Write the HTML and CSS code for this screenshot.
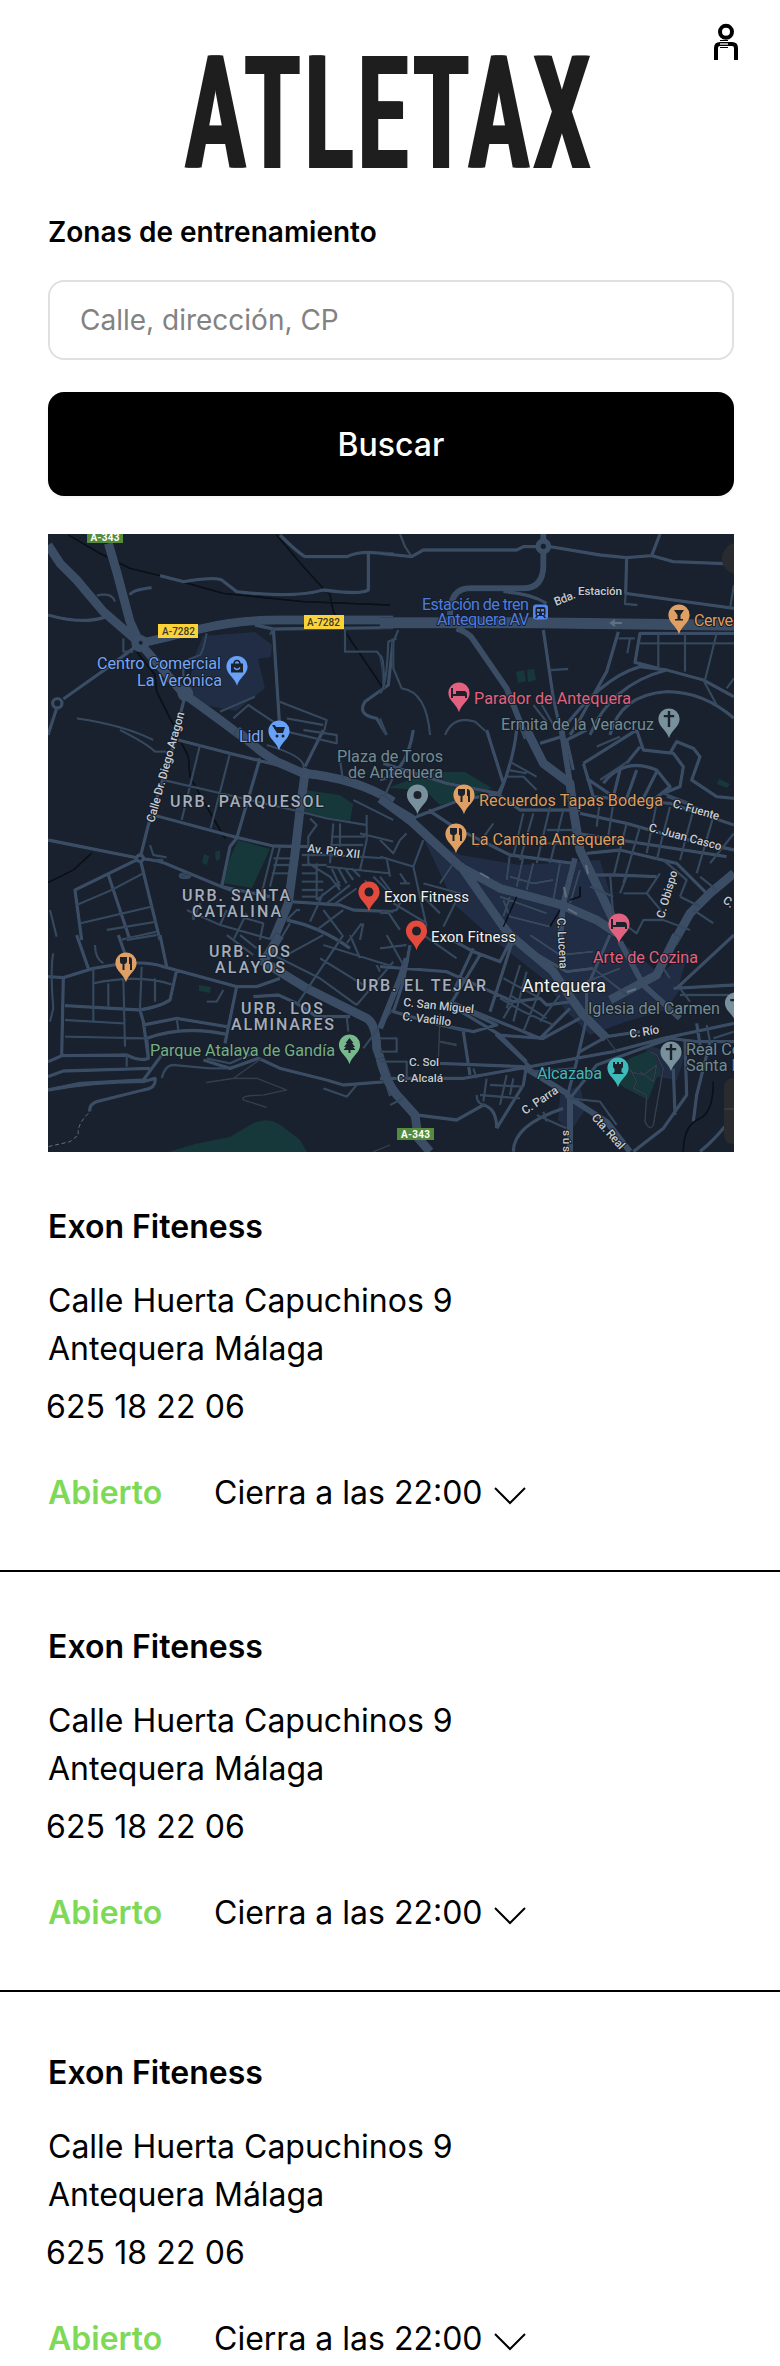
FILE: index.html
```html
<!DOCTYPE html>
<html lang="es">
<head>
<meta charset="utf-8">
<title>Atletax</title>
<link rel="stylesheet" href="styles.css">
</head>
<body>
<header class="header">
  <h1 class="logo"><span class="logo-text">ATLETAX</span></h1>
  <svg class="user" viewBox="714 22 24 40" fill="none" stroke="#000" stroke-width="4"><circle cx="726" cy="31.8" r="6"/><path d="M716 60V48Q716 44 720 44H732Q736 44 736 48V60"/><path d="M720 40.5h8M720 47.5h8" stroke-width="1"/><path d="M720 44h8" stroke="#ddd" stroke-width="1.5"/></svg>
</header>
<main>
  <form class="search">
    <h2 class="search-title">Zonas de entrenamiento</h2>
    <input class="search-input" type="text" placeholder="Calle, dirección, CP">
    <button class="search-button" type="button">Buscar</button>
  </form>
  <svg class="map" viewBox="48 534 686 618">
    <defs>
      <path id="pin" d="M0 19.3C-2 11-10.6 8-10.6 0A10.6 10.6 0 0 1 10.6 0C10.6 8 2 11 0 19.3Z"/>
      <g id="fork"><path d="M-6-6h7v5q-1 2-2.500 2v6h-2v-6q-2.500 0-2.500-2Z"/><path d="M3-6q3 0 3 3v10h-2V1h-1Z"/></g>
      <path id="bed" d="M-8-5h2v6h3v-3h9q2 1 2 3v4h-2V3H-6v2h-2Z"/>
      <path id="cross" d="M-1.200-8h2.400v4h4v2.300h-4V8h-2.400V-1.700h-4V-4h4Z"/>
    </defs>
    <rect class="land" x="48" y="534" width="686" height="618"/>

    <g class="downtown">
      <path d="M203 636L255 632 272 645 271 657 258 659 265 688 236 711 199 704 188 690 195 655Z"/>
      <path d="M422 835L460 855 520 865 600 860 612 900 613 935 680 990 665 1010 625 1022 590 1035 565 1010 545 980 500 945 455 905Z"/>
      <path d="M665 970l24-20-13 45-25 12Z"/><path d="M560 1095l20-10 5 25-15 22-12-12Z"/><path d="M645 1045l40 10-8 25-25-4Z"/>
    </g>
    <g class="park">
      <path d="M230 858L238 840 270 849 252 888 222 883Z"/><path d="M305 790L340 795 353 804 350 822 305 814Z"/>
      <path d="M388 788L430 772 465 772 492 788 475 795 440 805 425 790Z"/>
      <path d="M630 1058L651 1050 660 1070 648 1100 625 1088 612 1078Z"/>
      <path d="M168 1152L195 1144 230 1137 250 1125Q267 1115 282 1126L300 1140 307 1152Z"/>
      <path d="M516 672l8-2 2 11-8 2zM527 670l7-1 2 11-8 2zM204 854l5 2-2 9-5-2zM215 852l5-2v9l-4 2zM199 985l12 2-1 6-11-2zM719 779l11 5-3 4-10-4z"/>
    </g>

    <!-- north-west -->
    <g class="roads" transform="translate(40 525) scale(.33333)">
      <path class="rail" d="M85 30L180 85 270 130 360 152 550 205 790 230 1050 240M710 30L790 125 845 185 870 210 880 260 935 350 1030 490M290 380L345 450 350 500 395 590 420 630"/>
      <path class="xl" d="M24 60L60 115 110 165 190 260 300 355 430 505 540 585 620 645M205 55L230 140 270 290 300 355Q370 340 480 312T720 285H1060" />
      <path class="m" d="M300 355L200 430 70 522M50 550L24 630M720 30Q770 80 795 95H920Q950 82 985 82L1060 87M985 85V195Q960 210 850 195Q760 220 590 200L545 165Q520 155 430 170L360 152M700 310L718 590M645 300L700 312 1060 308M24 270Q130 300 200 275M1060 340L1045 480 975 530Q950 570 1010 580L1040 630M270 210Q275 195 335 188"/>
      <path class="s" d="M225 230Q215 200 170 212M250 340V380H280M500 325Q490 380 480 390L430 410V460M915 310V380H1010Q1030 390 1030 490M110 580Q250 600 340 645M580 580L625 540 700 590 730 630M718 530L860 585 850 630M740 580L850 600M540 560L645 515M700 310L690 330"/>
      <circle class="m" cx="52" cy="535" r="14"/><circle class="hub" cx="436" cy="505" r="24"/><circle class="hub" cx="300" cy="355" r="26"/><circle class="eye" cx="302" cy="353" r="6"/>
      <path class="m" d="M432 525L405 630"/>
    </g>
    <!-- north-east -->
    <g class="roads" transform="translate(380 525) scale(.33333)">
      <path class="xl" d="M0 290H450L1062 298"/>
      <path class="xl" d="M0 290H450L1062 298" transform="translate(0 6)"/>
      <path class="l" d="M490 27V120Q490 190 430 190H270Q210 190 210 270M230 310Q270 325 280 345L380 490 440 640"/>
      <path class="m" d="M0 85L95 95 130 75H410L430 65H510L660 90 740 98 815 92 880 110 1062 117M840 27L815 92M740 98L737 205 1062 250M370 200Q450 205 500 235M490 315L520 520 545 630M715 320L680 440 590 600 570 630M540 625Q660 460 780 425L860 435Q690 480 630 630M860 435L970 465 1062 515M835 430L765 412 780 325H1062M690 630Q720 510 860 500 970 500 1062 580"/>
      <path class="s" d="M60 27L75 65 95 95M737 205L735 237 773 240M55 315L40 350V430L65 490Q140 500 150 630M0 505Q20 490 25 350L50 340M0 390Q15 400 10 490M195 630Q220 570 285 590L330 630M513 435L565 432M835 325V430M915 325V440M1010 325L975 465M780 355H1062M715 340H765M750 340L742 385M970 465L1010 540M1062 460L1040 490M460 540L500 590M480 530L520 600M1062 180L1050 250M0 580L20 630"/>
      <circle class="hub" cx="490" cy="64" r="24"/><circle class="eye" cx="490" cy="64" r="8"/>
    </g>
    <!-- west -->
    <g class="roads" transform="translate(40 730) scale(.33333)">
      <path class="rail" d="M420 30L445 80 450 140 500 230 555 325M155 370L100 420 24 458"/>
      <path class="xl" d="M590 0Q650 60 710 95L790 130Q950 145 1060 215M795 130L780 240 765 370 745 520 700 630"/>
      <path class="m" d="M415 0L325 285 300 385 350 590 360 630M24 330L300 385 105 480 125 630M300 385Q360 390 400 410L545 470 600 490M415 30L570 70 740 112M340 255L590 322 700 348 810 350M205 435L270 630M795 110L850 0M545 470L570 350 590 325M590 325L660 85M750 515L900 525 940 540 1060 545M740 570Q840 590 930 655M545 470L690 500"/>
      <path class="s" d="M370 150L780 245 860 265 980 285M480 45L425 270M570 70L512 295M240 0Q320 40 345 65H380M680 45Q800 80 790 115M720 0L890 40 890 15 790 0M900 90L908 145M1060 140L1035 195M980 255V330L960 420M880 280L870 400M900 280V350M880 320H975M870 345H970M700 350L665 490M720 350L690 470M700 385H750M700 405H750M695 430H745M785 375H870L1040 385 1050 440M785 405H860M785 430H830M785 455H850M785 480H850M785 500H830M830 400V510M805 375V400L870 440 900 480M810 265L830 285 805 320 805 370M860 410L1050 430M875 415L900 470M895 415L920 460M915 415L940 450M935 415L960 440M810 575L850 490M830 510L900 455M860 520L930 465M880 525L950 475M330 345L340 375 380 382M370 390H340M420 435L450 440M110 525L215 480 310 430M120 580L335 530M200 600L350 575M240 630L350 605M460 570V530M440 540L540 585 560 540M580 630L620 550M480 520L460 570M600 560L670 580 660 630M540 585L700 630M740 570L770 540H780M720 630L750 580M850 540L910 620M830 600L910 540M970 580L960 630M965 580L920 640M975 450L1000 490M1000 440L1040 480M940 210L1060 270M960 310L1060 335M30 540L50 620"/>
      <circle class="hub" cx="300" cy="385" r="15"/><circle class="eye" cx="300" cy="385" r="5"/><circle class="hub" cx="794" cy="130" r="17"/><ellipse class="s" cx="435" cy="437" rx="16" ry="7"/>
    </g>
    <!-- east -->
    <g class="roads" transform="translate(380 730) scale(.33333)">
      <path class="xl" d="M0 205L95 275 240 410 360 475 545 525 650 570 710 610M440 0L490 100 570 160 580 240 600 360 700 570M240 405L370 590 410 640M1062 430L990 490 930 550 880 640"/>
      <path class="l" d="M545 0L570 160M585 385L550 520 540 630"/>
      <path class="m" d="M320 0L370 160 355 190 200 160 10 100M410 0Q400 90 360 190L240 210 110 260M110 265L0 200M145 240L220 290 390 375 580 400M350 190L420 240 600 240M600 250L740 280 880 320 1062 360M620 370L720 360 890 400 980 490M590 310L750 335 1040 380M630 435H705L830 440M0 150Q80 130 100 0M610 100L770 0M610 100L640 200 870 220 1062 285M620 145L700 200M670 160Q730 80 830 120L870 170 820 210M700 200L720 120M740 205L770 120M790 205L830 125M740 100L780 50M770 0L790 60 880 70 910 110 900 170 850 190M870 70L890 35 940 55 960 80 935 150 1010 200 1062 205M580 120L560 30 620 0M480 40L545 20"/>
      <path class="s" d="M380 140H430L470 180M385 120L440 130M390 95L470 140M340 280L290 350M430 250L400 380M460 250L420 390M510 230L470 400M550 240L510 400M500 300H590M500 340H590M390 370L380 450M430 380L410 470M540 400L520 510M460 400L440 480M660 210L650 290M700 220L680 350M740 280L700 440M780 290L730 460M830 220L800 370M870 230L830 390M940 240L900 390M1000 260L950 430M1062 310L990 400M630 470L700 500M690 430L700 560M740 440L720 490M600 420L570 520M390 440L460 460 520 450M370 510L390 560 510 590M390 500L370 560M360 500L500 550M730 490H800L850 550M800 490L840 430M850 390L920 450 900 500M900 500L960 530M960 440L1010 480M940 540L1000 580M730 580L770 610 790 570 850 570 930 600M0 380L100 410 140 590M100 410L130 330M0 330L40 370 60 330 80 310M60 460H90M60 430L80 460M130 460L240 490 190 590M180 460L220 400M0 440L60 520 50 540 0 550M130 500L180 550M20 540L60 600M40 520L140 580M850 190L930 220M860 200L970 240M650 50L720 20M660 150L750 90"/>
      <path class="rail" d="M370 590L410 500M510 590L540 540M600 470V500L570 510"/>
    </g>
    <!-- south-west -->
    <g class="roads" transform="translate(40 935) scale(.33333)">
      <path class="xl" d="M720 0L670 80 800 160 980 250Q1010 270 1010 340L1060 480"/>
      <path class="m" d="M24 125L70 128 65 365M70 128L160 100 250 85Q330 80 370 95L590 155 555 325M590 155L650 155 720 130M110 0L145 100M360 0L380 95M235 0L265 85M24 380L65 362 260 360Q300 380 325 370L310 260 300 225 75 212M300 225Q360 215 390 195L410 105M24 425L70 408 330 400M24 465L120 445 310 435 365 360M24 465Q160 440 310 440L345 430Q350 460 310 465L170 500Q145 510 150 530M325 370L320 310Q430 270 560 298M310 270L410 250 560 275M640 185L715 180 770 205 830 245 930 245M490 375L570 400 655 370 720 400 860 435 910 450 1040 440"/>
      <path class="s" d="M160 100V260M205 145V215M250 130L255 335M305 95L300 225M345 130V200M160 145Q300 115 400 150M75 255L250 265M75 305L325 310M260 360V395M410 250L415 285M550 165L530 200H500M40 55Q30 100 40 220L30 260M165 30Q165 70 190 85M260 15L350 0M365 430Q375 390 400 390L510 400 565 400M500 370L570 385 650 350M560 0L640 60M600 0L650 40M700 60L840 130 950 210M740 60L850 0M770 210L850 90 910 0M840 70L970 150M920 245L925 290M850 30L1060 95M930 0L960 70M970 340L1060 220M950 210L1060 80M1010 90L1020 110M850 460L920 485 950 450"/>
      <path class="rail trail" d="M497 443L580 430 665 370M580 430L650 430 740 465 670 480Q600 480 610 495L680 517M1000 650L1050 630"/>
      <path class="path" d="M145 535Q110 570 115 600L90 620 24 635"/>
    </g>
    <!-- south-east -->
    <g class="roads" transform="translate(380 935) scale(.33333)">
      <path class="xl" d="M390 0L520 110 570 185 610 240 680 310M0 370Q20 450 60 490L105 540 115 610 150 650M890 0L830 120 690 195"/>
      <path class="l" d="M720 20L790 150 900 250M0 280L60 130 80 70M430 395L560 475 570 490 570 650M570 490L680 560 750 650"/>
      <path class="m" d="M0 95L200 110 400 200 480 190 500 210 575 200M90 30L70 140 40 230 180 270 280 290 350 270 200 200M190 0L280 50 360 80 400 0M280 40L220 170M330 230L400 10M300 60L210 210 360 300 440 380M370 0L560 110 640 100M690 0L620 160 620 250 590 380 560 490M210 200L480 310 570 220M250 290L270 420M0 430H250L450 395 700 350 850 310 1062 265M180 385L430 395M600 350L680 305 780 290M350 580L430 450 440 390M350 580Q350 520 310 510L230 555 110 540M450 395L350 300 490 310 600 250M400 650Q400 570 550 520M890 160L1062 0M880 160L1062 150M1062 320L950 320 870 310 650 390 570 490M915 320L920 480 850 580 760 650M990 320L950 480 940 560M880 400L885 540M950 265L960 330M1062 540Q1010 610 960 650"/>
      <path class="s" d="M20 0L70 90M0 40L80 30M130 0L230 70M400 200L370 250M440 110L400 260M490 140L430 290M540 180L480 260M390 180L500 250M420 90L380 220M370 130L480 190M360 190L430 230M430 230L520 270M620 140L720 100M640 100L740 180M850 100L870 130M900 160L930 200M320 430L310 500M380 420L360 510M300 480L420 490M330 450L430 455M290 480Q290 510 320 510M450 410L580 400M280 400L290 430M0 310H50V350H0M0 380H80V430M230 330L180 320M400 430L390 480M470 540L560 580M490 530L500 560M570 490L660 500 710 570M900 180L1050 180M980 270L990 320M1000 310L1062 290M30 510L70 490M450 0L540 60 640 50M180 270L260 290"/>
      <path class="trail" d="M180 235L175 380M175 320L225 330M680 310L710 350M750 400L770 440 760 460 800 480 795 560Q810 590 820 570L850 400 830 360 810 350M750 410L790 420 830 390 820 440 780 410"/>
      <path class="rail" d="M1000 440Q1000 530 960 550 910 570 910 650"/>
    </g>
    <g class="arrows"><path d="M611 623h11M615 620l-4 3 4 3M480 873l9 5M586 865l2 9M564 887l2 10M568 909l9 5M627 992l9-3"/></g>

    <!-- map controls cut off by the right edge -->
    <path class="control" d="M734 543a16 16 0 0 0 0 31ZM734 1078q-10 0-10 10v46q0 10 10 10Z"/><path class="control-line" d="M724 1109h10"/>

    <g class="shields">
      <rect class="green" x="87" y="530" width="36" height="13"/><text x="90.500" y="541" textLength="29">A-343</text>
      <rect class="green" x="397" y="1128" width="37" height="12"/><text x="401" y="1138" textLength="29">A-343</text>
      <rect class="yellow" x="158" y="624" width="40" height="14"/><text class="dark" x="162" y="635" textLength="33">A-7282</text>
      <rect class="yellow" x="304" y="615" width="40" height="14"/><text class="dark" x="307" y="626" textLength="33">A-7282</text>
    </g>
    <g class="label">
      <g class="blue"><text x="97" y="669" textLength="124">Centro Comercial</text><text x="137" y="685.500" textLength="85">La Verónica</text><text x="239" y="742" textLength="25">Lidl</text></g>
      <g class="rail-label"><text x="422" y="610" textLength="107">Estación de tren</text><text x="437" y="625" textLength="92">Antequera AV</text></g>
      <g class="pink"><text x="474" y="704" textLength="157">Parador de Antequera</text><text x="593" y="963" textLength="105">Arte de Cozina</text></g>
      <g class="gray"><text x="501" y="729.500" textLength="153">Ermita de la Veracruz</text><text x="337" y="762" textLength="106">Plaza de Toros</text><text x="348" y="778" textLength="95">de Antequera</text><text x="588" y="1014" textLength="132">Iglesia del Carmen</text><text x="686" y="1055">Real Co</text><text x="686" y="1071">Santa M</text></g>
      <g class="orange"><text x="694" y="626" textLength="39">Cerve</text><text x="479" y="806" textLength="184">Recuerdos Tapas Bodega</text><text x="471" y="845" textLength="154">La Cantina Antequera</text></g>
      <g class="white"><text x="384" y="902" textLength="85">Exon Fitness</text><text x="431" y="941.500" textLength="85">Exon Fitness</text></g>
      <text class="city" x="522" y="991.500" textLength="84">Antequera</text>
      <text class="lime" x="150" y="1056" textLength="185">Parque Atalaya de Gandía</text>
      <text class="teal" x="537" y="1079" textLength="65">Alcazaba</text>
    </g>
    <g class="district">
      <text x="170" y="807" textLength="154">URB. PARQUESOL</text><text x="182" y="901" textLength="108">URB. SANTA</text><text x="192" y="917" textLength="89">CATALINA</text><text x="209" y="956.500" textLength="81">URB. LOS</text><text x="215" y="973" textLength="70">ALAYOS</text><text x="241" y="1013.500" textLength="82">URB. LOS</text><text x="231" y="1029.500" textLength="103">ALMINARES</text><text x="356" y="991" textLength="130">URB. EL TEJAR</text>
    </g>
    <g class="street">
      <text transform="translate(154 823) rotate(-74.500)" textLength="114">Calle Dr. Diego Aragon</text>
      <text transform="translate(307 852) rotate(7)" textLength="53">Av. Pío XII</text><text transform="translate(556 606) rotate(-22)" textLength="22">Bda.</text><text x="578" y="595" textLength="44">Estación</text>
      <text transform="translate(672 807) rotate(16)" textLength="48">C. Fuente</text><text transform="translate(648 831) rotate(15)" textLength="75">C. Juan Casco</text><text transform="translate(664 919) rotate(-74)" textLength="49">C. Obispo</text><text transform="translate(722 902) rotate(35)">C.</text>
      <text transform="translate(557 918) rotate(87)" textLength="51">C. Lucena</text><text transform="translate(403 1006) rotate(6)" textLength="71">C. San Miguel</text><text transform="translate(402 1020) rotate(7)" textLength="49">C. Vadillo</text><text x="409" y="1066" textLength="30">C. Sol</text><text x="397" y="1082" textLength="46">C. Alcalá</text><text transform="translate(630 1038) rotate(-9)" textLength="30">C. Río</text><text transform="translate(525 1115) rotate(-34)" textLength="41">C. Parra</text><text transform="translate(591 1118) rotate(48)" textLength="43">Cta. Real</text><text transform="translate(563 1130) rotate(90)" textLength="22">sús</text>
    </g>

    <g transform="translate(237 666.500)"><use href="#pin" class="p-blue"/><path class="ink" d="M-6-3h12v9H-6Z"/><path class="ink-line" d="M-3-2q0-4 3-4t3 4"/><path class="smile" d="M-3 1q3 4 6 0"/></g>
    <g transform="translate(279 731)"><use href="#pin" class="p-blue"/><path class="ink" d="M-7-6h3l1 2h9l-2 6h-6Z"/><circle class="ink" cx="-2" cy="5" r="1.500"/><circle class="ink" cx="4" cy="5" r="1.500"/></g>
    <g transform="translate(540.500 612)"><rect class="p-rail" x="-7.500" y="-7.500" width="15" height="15" rx="3"/><rect class="ink" x="-5" y="-5" width="10" height="9" rx="2"/><path class="p-rail" d="M-3.500-3h3v2.500h-3zM.5-3h3v2.500h-3zM-3.500 1h2v2h-2zM1.500 1h2v2h-2z"/><path class="ink-line" d="M-3 4l-2 2M3 4l2 2"/></g>
    <g transform="translate(679 615)"><use href="#pin" class="p-orange"/><path class="ink" d="M-5-5h10L1.500 0v4H4v1.500h-8V4h2.500V0Z"/></g>
    <g transform="translate(459 693)"><use href="#pin" class="p-pink"/><use href="#bed" class="ink"/></g>
    <g transform="translate(669 719)"><use href="#pin" class="p-gray"/><use href="#cross" class="ink"/></g>
    <g transform="translate(417.500 795)"><use href="#pin" class="p-gray"/><circle class="ink" r="4"/></g>
    <g transform="translate(464 795)"><use href="#pin" class="p-orange"/><use href="#fork" class="ink"/></g>
    <g transform="translate(456 834)"><use href="#pin" class="p-orange"/><use href="#fork" class="ink"/></g>
    <g transform="translate(126 963)"><use href="#pin" class="p-orange"/><use href="#fork" class="ink"/></g>
    <g transform="translate(369 892)"><use href="#pin" class="p-red"/><circle class="ink" r="4.500"/></g>
    <g transform="translate(416.500 931)"><use href="#pin" class="p-red"/><circle class="ink" r="4.500"/></g>
    <g transform="translate(619 924)"><use href="#pin" class="p-pink"/><use href="#bed" class="ink"/></g>
    <g transform="translate(349.500 1045)"><use href="#pin" class="p-lime"/><path class="ink" d="M0-7L4-2H2.500L5.500 2H3.500L6 5H1V8H-1V5H-6L-3.500 2H-5.500L-2.500-2H-4Z"/></g>
    <g transform="translate(618 1068)"><use href="#pin" class="p-teal"/><path class="ink" d="M-5-6h2v2h2v-2h2v2h2v-2h2v5L3.500 1v3L6 6H-6l2.500-2V1L-5-1Z"/></g>
    <g transform="translate(671 1052)"><use href="#pin" class="p-gray"/><use href="#cross" class="ink"/></g>
    <g transform="translate(735.500 1003)"><use href="#pin" class="p-gray"/><use href="#cross" class="ink"/></g>
  </svg>

  <section class="gym">
    <h3 class="gym-name">Exon Fiteness</h3>
    <p class="gym-address">Calle Huerta Capuchinos 9<br>Antequera Málaga</p>
    <p class="gym-phone">625 18 22 06</p>
    <div class="gym-status"><strong class="open">Abierto</strong><span class="hours">Cierra a las 22:00</span><svg class="chevron" viewBox="0 0 32 18"><path d="M1 1L16 16 31 1"/></svg></div>
  </section>
  <section class="gym">
    <h3 class="gym-name">Exon Fiteness</h3>
    <p class="gym-address">Calle Huerta Capuchinos 9<br>Antequera Málaga</p>
    <p class="gym-phone">625 18 22 06</p>
    <div class="gym-status"><strong class="open">Abierto</strong><span class="hours">Cierra a las 22:00</span><svg class="chevron" viewBox="0 0 32 18"><path d="M1 1L16 16 31 1"/></svg></div>
  </section>
  <section class="gym gym-last">
    <h3 class="gym-name">Exon Fiteness</h3>
    <p class="gym-address">Calle Huerta Capuchinos 9<br>Antequera Málaga</p>
    <p class="gym-phone">625 18 22 06</p>
    <div class="gym-status"><strong class="open">Abierto</strong><span class="hours">Cierra a las 22:00</span><svg class="chevron" viewBox="0 0 32 18"><path d="M1 1L16 16 31 1"/></svg></div>
  </section>
</main>
</body>
</html>
```
FILE: styles.css
```css
* { box-sizing: border-box; }
body { margin: 0; width: 780px; height: 2366px; overflow: hidden; background: #fff; color: #000; font-family: Inter, "Liberation Sans", sans-serif; }
h1, h2, h3, p { margin: 0; }
.header { position: relative; height: 208px; padding-top: 58px; }
.logo { display: flex; justify-content: center; height: 112px; line-height: 112px; font-family: Roboto, sans-serif; font-size: 157.5px; font-weight: 700; color: #1e1e1e; }
.logo-text { transform: scaleX(.56); letter-spacing: 9.5px; text-shadow: 3px 0 #1e1e1e, -3px 0 #1e1e1e; white-space: nowrap; }
.user { position: absolute; left: 714px; top: 22px; width: 24px; height: 40px; }
.search { display: flex; flex-direction: column; padding: 0 46px 0 48px; }
.search-title { height: 48px; line-height: 48px; font-size: 28px; font-weight: 600; }
.search-input { height: 80px; margin-top: 24px; padding: 0 30px; border: 2px solid #e0e0e0; border-radius: 16px; font: 400 28px Inter, sans-serif; background: #fff; }
.search-input::placeholder { color: #828282; opacity: 1; }
.search-button { height: 104px; margin-top: 32px; border: 0; border-radius: 16px; background: #000; color: #fff; font: 500 32px Inter, sans-serif; box-shadow: 0 2px 4px rgba(0, 0, 0, .05); }
.map { display: block; width: 686px; height: 618px; margin: 38px 0 0 48px; font-family: Roboto, sans-serif; }
.land { fill: #18212d; }
.downtown { fill: #212d45; }
.park { fill: #17383b; }
.roads { fill: none; stroke: #3b4d65; stroke-linejoin: round; filter: drop-shadow(0 0 1.5px #0a1017); }
.xl { stroke-width: 27; }
.l { stroke-width: 18; }
.m { stroke-width: 10; }
.s { stroke-width: 7; stroke: #36485e; }
.rail { stroke-width: 4; stroke: #0b1119; }
.trail { stroke-width: 5; stroke: #323e4b; }
.path { stroke-width: 3; stroke: #607d7b; stroke-dasharray: 12 8; }
.hub { fill: #3c4e66; stroke: none; }
.eye { fill: #18212d; stroke: none; }
.arrows { fill: none; stroke: #60707f; stroke-width: 2; }
.control { fill: #292b2e; }
.control-line { stroke: #44464a; }
.shields { font-size: 10px; font-weight: 700; fill: #fff; }
.green { fill: #558b3c; }
.yellow { fill: #fbd238; }
.shields .dark { fill: #3c3a2c; font-weight: 500; }
.label, .district, .street { paint-order: stroke; stroke: #151d28; stroke-width: 2px; stroke-linejoin: round; }
.label { font-size: 16.2px; }
.blue { fill: #78a5f3; }
.rail-label { fill: #4d7ce0; }
.pink { fill: #e0627f; }
.gray { fill: #738b95; }
.orange { fill: #df9b5b; }
.white { fill: #f1f1f1; font-size: 15px; }
.city { fill: #f1f1f1; font-size: 18px; }
.lime { fill: #75ad87; }
.teal { fill: #45b5b5; }
.district { font-size: 16px; font-weight: 500; fill: #a5adba; }
.street { font-size: 11.8px; font-weight: 500; fill: #c7cbd1; }
.p-blue { fill: #68a1f8; }
.p-rail { fill: #5385ee; }
.p-orange { fill: #e1a063; }
.p-pink { fill: #e26180; }
.p-gray { fill: #78919c; }
.p-red { fill: #e34a3b; }
.p-lime { fill: #78b88d; }
.p-teal { fill: #3fbaba; }
.ink { fill: #1b222b; }
.ink-line { fill: none; stroke: #1b222b; stroke-width: 1.6; }
.smile { fill: none; stroke: #68a1f8; stroke-width: 1.3; }
.gym { padding: 51px 48px 53px; border-bottom: 2px solid #000; font-size: 32px; line-height: 48px; }
.gym-name { font-size: 32px; font-weight: 600; }
.gym-address { margin-top: 26px; }
.gym-phone { margin: 10px 0 0 -2px; letter-spacing: .1px; }
.gym-status { display: flex; align-items: center; margin-top: 38px; }
.open { width: 166px; font-weight: 600; color: #7ed957; }
.hours { width: 280px; white-space: nowrap; }
.chevron { width: 32px; height: 18px; margin-top: 5px; fill: none; stroke: #000; stroke-width: 2; }
.gym-last { padding-top: 57px; padding-bottom: 0; border-bottom: 0; }
```
